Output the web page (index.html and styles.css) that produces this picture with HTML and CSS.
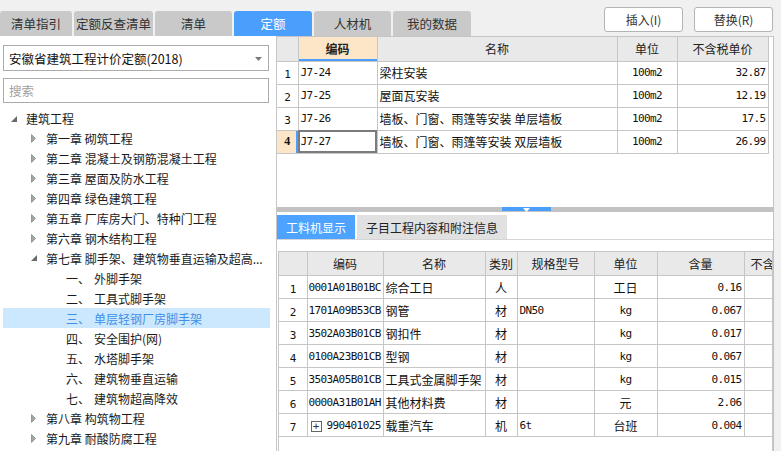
FILE: index.html
```html
<!DOCTYPE html>
<html lang="zh-CN">
<head>
<meta charset="utf-8">
<link rel="stylesheet" href="styles.css">
</head>
<body>
<div class="app">
  <div class="topbar">
    <div class="tabs">
      <div class="tab w72">清单指引</div>
      <div class="tab w79">定额反查清单</div>
      <div class="tab w77">清单</div>
      <div class="tab w78 active">定额</div>
      <div class="tab w77">人材机</div>
      <div class="tab w78">我的数据</div>
    </div>
    <div class="actions">
      <button class="btn">插入(I)</button>
      <button class="btn">替换(R)</button>
    </div>
  </div>
  <div class="main">
    <div class="left">
      <div class="combo">
        <span>安徽省建筑工程计价定额(2018)</span>
        <svg class="caret" width="7" height="4" viewBox="0 0 7 4"><polygon points="0,0 7,0 3.5,4" fill="#7a7a7a"/></svg>
      </div>
      <div class="search">搜索</div>
      <div class="tree">
        <div class="node l0"><span class="tw"><svg width="6" height="6" viewBox="0 0 6 6"><polygon points="6,0 6,6 0,6" fill="#6a6a6a"/></svg></span>建筑工程</div>
        <div class="node l1"><span class="tw"><svg width="5" height="9" viewBox="0 0 5 9"><polygon points="0.5,0.5 4.5,4.5 0.5,8.5" fill="#a6a6a6" stroke="#8a8a8a" stroke-width="0.8"/></svg></span>第一章 砌筑工程</div>
        <div class="node l1"><span class="tw"><svg width="5" height="9" viewBox="0 0 5 9"><polygon points="0.5,0.5 4.5,4.5 0.5,8.5" fill="#a6a6a6" stroke="#8a8a8a" stroke-width="0.8"/></svg></span>第二章 混凝土及钢筋混凝土工程</div>
        <div class="node l1"><span class="tw"><svg width="5" height="9" viewBox="0 0 5 9"><polygon points="0.5,0.5 4.5,4.5 0.5,8.5" fill="#a6a6a6" stroke="#8a8a8a" stroke-width="0.8"/></svg></span>第三章 屋面及防水工程</div>
        <div class="node l1"><span class="tw"><svg width="5" height="9" viewBox="0 0 5 9"><polygon points="0.5,0.5 4.5,4.5 0.5,8.5" fill="#a6a6a6" stroke="#8a8a8a" stroke-width="0.8"/></svg></span>第四章 绿色建筑工程</div>
        <div class="node l1"><span class="tw"><svg width="5" height="9" viewBox="0 0 5 9"><polygon points="0.5,0.5 4.5,4.5 0.5,8.5" fill="#a6a6a6" stroke="#8a8a8a" stroke-width="0.8"/></svg></span>第五章 厂库房大门、特种门工程</div>
        <div class="node l1"><span class="tw"><svg width="5" height="9" viewBox="0 0 5 9"><polygon points="0.5,0.5 4.5,4.5 0.5,8.5" fill="#a6a6a6" stroke="#8a8a8a" stroke-width="0.8"/></svg></span>第六章 钢木结构工程</div>
        <div class="node l1"><span class="tw"><svg width="6" height="6" viewBox="0 0 6 6"><polygon points="6,0 6,6 0,6" fill="#6a6a6a"/></svg></span>第七章 脚手架、建筑物垂直运输及超高...</div>
        <div class="node l2"><span class="no">一、</span>外脚手架</div>
        <div class="node l2"><span class="no">二、</span>工具式脚手架</div>
        <div class="node l2 sel"><span class="no">三、</span>单层轻钢厂房脚手架</div>
        <div class="node l2"><span class="no">四、</span>安全围护(网)</div>
        <div class="node l2"><span class="no">五、</span>水塔脚手架</div>
        <div class="node l2"><span class="no">六、</span>建筑物垂直运输</div>
        <div class="node l2"><span class="no">七、</span>建筑物超高降效</div>
        <div class="node l1"><span class="tw"><svg width="5" height="9" viewBox="0 0 5 9"><polygon points="0.5,0.5 4.5,4.5 0.5,8.5" fill="#a6a6a6" stroke="#8a8a8a" stroke-width="0.8"/></svg></span>第八章 构筑物工程</div>
        <div class="node l1"><span class="tw"><svg width="5" height="9" viewBox="0 0 5 9"><polygon points="0.5,0.5 4.5,4.5 0.5,8.5" fill="#a6a6a6" stroke="#8a8a8a" stroke-width="0.8"/></svg></span>第九章 耐酸防腐工程</div>
      </div>
    </div>
    <div class="right">
      <div class="upper">
        <table class="grid top">
          <colgroup><col class="c21"><col class="c79"><col class="c240"><col class="c60"><col class="c91"></colgroup>
          <thead>
            <tr><th></th><th class="hsel">编码</th><th>名称</th><th>单位</th><th>不含税单价</th></tr>
          </thead>
          <tbody>
            <tr><td class="num"><span class="m">1</span></td><td class="m">J7-24</td><td>梁柱安装</td><td class="m ctr">100m2</td><td class="m rt">32.87</td></tr>
            <tr><td class="num"><span class="m">2</span></td><td class="m">J7-25</td><td>屋面瓦安装</td><td class="m ctr">100m2</td><td class="m rt">12.19</td></tr>
            <tr><td class="num"><span class="m">3</span></td><td class="m">J7-26</td><td>墙板、门窗、雨篷等安装 单层墙板</td><td class="m ctr">100m2</td><td class="m rt">17.5</td></tr>
            <tr><td class="num nsel"><b>4</b></td><td class="m cur">J7-27</td><td>墙板、门窗、雨篷等安装 双层墙板</td><td class="m ctr">100m2</td><td class="m rt">26.99</td></tr>
          </tbody>
        </table>
      </div>
      <div class="splitter"><div class="handle"><svg width="7" height="4" viewBox="0 0 7 4"><polygon points="0,0 7,0 3.5,4" fill="#ffffff"/></svg></div></div>
      <div class="lower">
        <div class="subtabs">
          <div class="subtab active">工料机显示</div>
          <div class="subtab">子目工程内容和附注信息</div>
        </div>
        <div class="gridbox">
          <table class="grid bottom">
            <colgroup><col class="b28"><col class="b76"><col class="b102"><col class="b32"><col class="b77"><col class="b63"><col class="b87"><col class="b60"></colgroup>
            <thead>
              <tr><th></th><th>编码</th><th>名称</th><th>类别</th><th>规格型号</th><th>单位</th><th>含量</th><th class="clip">不含</th></tr>
            </thead>
            <tbody>
              <tr><td class="num"><span class="m">1</span></td><td class="m code">0001A01B01BC</td><td>综合工日</td><td class="ctr">人</td><td></td><td class="ctr">工日</td><td class="m rt">0.16</td><td></td></tr>
              <tr><td class="num"><span class="m">2</span></td><td class="m code">1701A09B53CB</td><td>钢管</td><td class="ctr">材</td><td class="m">DN50</td><td class="m ctr">kg</td><td class="m rt">0.067</td><td></td></tr>
              <tr><td class="num"><span class="m">3</span></td><td class="m code">3502A03B01CB</td><td>钢扣件</td><td class="ctr">材</td><td></td><td class="m ctr">kg</td><td class="m rt">0.017</td><td></td></tr>
              <tr><td class="num"><span class="m">4</span></td><td class="m code">0100A23B01CB</td><td>型钢</td><td class="ctr">材</td><td></td><td class="m ctr">kg</td><td class="m rt">0.067</td><td></td></tr>
              <tr><td class="num"><span class="m">5</span></td><td class="m code">3503A05B01CB</td><td>工具式金属脚手架</td><td class="ctr">材</td><td></td><td class="m ctr">kg</td><td class="m rt">0.015</td><td></td></tr>
              <tr><td class="num"><span class="m">6</span></td><td class="m code">0000A31B01AH</td><td>其他材料费</td><td class="ctr">材</td><td></td><td class="ctr">元</td><td class="m rt">2.06</td><td></td></tr>
              <tr><td class="num"><span class="m">7</span></td><td class="m code"><span class="plus">+</span>990401025</td><td>载重汽车</td><td class="ctr">机</td><td class="m">6t</td><td class="ctr">台班</td><td class="m rt">0.004</td><td></td></tr>
            </tbody>
          </table>
        </div>
      </div>
    </div>
  </div>
</div>
</body>
</html>
```

FILE: styles.css
```css
* { box-sizing: border-box; }
html, body { margin: 0; padding: 0; }
body {
  width: 781px;
  height: 451px;
  overflow: hidden;
  background: #f0f0f0;
  font-family: "Noto Sans CJK SC", "Noto Sans", sans-serif;
  font-size: 12px;
  color: #222;
}
.app { width: 781px; height: 451px; display: flex; flex-direction: column; }

.topbar { height: 36px; display: flex; justify-content: space-between; }
.tabs { display: flex; gap: 2px; padding-top: 11px; }
.tab {
  height: 25px;
  background: #c9c9c9;
  border-radius: 3px 3px 0 0;
  display: flex; align-items: center; justify-content: center;
  color: #333;
  font-size: 12.5px;
}
.tab.active { background: #4a9ffd; color: #fff; }
.w72 { width: 72px; } .w77 { width: 77px; } .w78 { width: 78px; } .w79 { width: 79px; }
.actions { display: flex; gap: 11px; padding: 7px 8px 0 0; }
.btn {
  width: 79px; height: 25px;
  background: #fff;
  border: 1px solid #b4b4b4;
  border-radius: 3px;
  font-family: inherit; font-size: 12px; color: #333;
  padding: 0;
}

.main { flex: 1; display: flex; min-height: 0; }
.left {
  width: 277px;
  background: #fff;
  border-right: 1px solid #c6c6c6;
  padding: 9px 0 0 3px;
}
.combo {
  width: 266px; height: 26px;
  border: 1px solid #ababab;
  display: flex; align-items: center; justify-content: space-between;
  padding: 0 6px 0 5px;
  font-size: 12.5px; color: #111;
}
.caret { margin-top: 1px; }
.search {
  margin-top: 7px;
  width: 266px; height: 25px;
  border: 1px solid #ababab;
  display: flex; align-items: center;
  padding-left: 5px;
  color: #a0a0a0; font-size: 12.5px;
}
.tree { margin-top: 5px; width: 267px; }
.node { height: 20px; display: flex; align-items: center; white-space: nowrap; color: #1a1a1a; }
.node.l0 { padding-left: 3px; }
.node.l1 { padding-left: 23px; }
.node.l2 { padding-left: 63px; }
.tw { width: 20px; height: 20px; display: flex; align-items: center; padding-left: 5px; }
.l0 .tw { padding-top: 2px; }
.no { width: 28px; }
.node.sel { background: #cce8ff; color: #3f8fe6; }

.right { width: 497px; display: flex; flex-direction: column; border-right: 1px solid #c2c2c2; }
.upper { height: 171px; background: #fff; border-top: 1px solid #c6c6c6; }
.splitter { height: 5px; background: #c2c2c2; display: flex; justify-content: center; padding-left: 3px; }
.handle { width: 49px; height: 4px; background: #4a9ffd; display: flex; justify-content: center; align-items: flex-start; padding-top: 1px; }
.handle svg { display: block; }
.lower { flex: 1; background: #fff; display: flex; flex-direction: column; min-height: 0; }
.subtabs { display: flex; gap: 2px; margin-top: 3px; height: 25px; border-bottom: 1px solid #d6d6d6; }
.subtab { height: 24px; display: flex; align-items: center; justify-content: center; background: #e1e1e1; color: #222; font-size: 12px; width: 150px; }
.subtab.active { background: #4da3ff; color: #fff; width: 78px; }
.gridbox {
  flex: 1; min-height: 0;
  margin: 11px 0 0 1px;
  width: 495px;
  overflow: hidden;
  border-left: 1px solid #c6c6c6;
  border-right: 1px solid #c6c6c6;
}

.grid { border-collapse: collapse; table-layout: fixed; }
.grid th, .grid td {
  border: 1px solid #c6c6c6;
  padding: 0 2px;
  white-space: nowrap; overflow: hidden;
  font-size: 12px;
  font-weight: normal;
  color: #111;
}
.grid th { background: #e9e9e9; text-align: center; color: #222; }
.grid thead tr { height: 24px; }
.grid tbody tr { height: 23px; }
.grid.top { width: 491px; }
.grid.top tr > *:first-child { border-left: 0; }
.grid.top thead th { border-top: 0; }
.c21 { width: 21px; } .c79 { width: 79px; } .c240 { width: 240px; } .c60 { width: 60px; } .c91 { width: 91px; }
.b28 { width: 28px; } .b76 { width: 76px; } .b102 { width: 102px; } .b32 { width: 32px; } .b77 { width: 77px; } .b63 { width: 63px; } .b87 { width: 87px; } .b60 { width: 60px; }
.grid.bottom { width: 525px; }
.grid.bottom tr > *:first-child { border-left: 0; }
.clip { text-align: left !important; padding-left: 6px !important; }
.hsel { background: #fde6c8 !important; font-weight: bold !important; box-shadow: inset 0 -2px 0 #4a9ffd; }
.num { text-align: center; background: #fff; }
.nsel { background: #fde6c8; box-shadow: inset -2px 0 0 #4a9ffd; font-family: "Liberation Serif", serif; font-size: 13px; }
.cur { outline: 2px solid #7c7c7c; outline-offset: -2px; }
.m { font-family: "DejaVu Sans Mono", "Liberation Mono", "Noto Sans CJK SC", monospace; font-size: 11px; letter-spacing: -0.6px; }
.grid td.m { font-size: 11px; }
.code { padding-left: 1px !important; }
.ctr { text-align: center; }
.rt { text-align: right; }
.plus {
  display: inline-flex; align-items: center; justify-content: center;
  width: 11px; height: 11px;
  border: 1px solid #666;
  font-size: 11px; line-height: 1; letter-spacing: 0;
  margin: 0 5px 0 2px;
  vertical-align: -1px;
  color: #333;
}
```
